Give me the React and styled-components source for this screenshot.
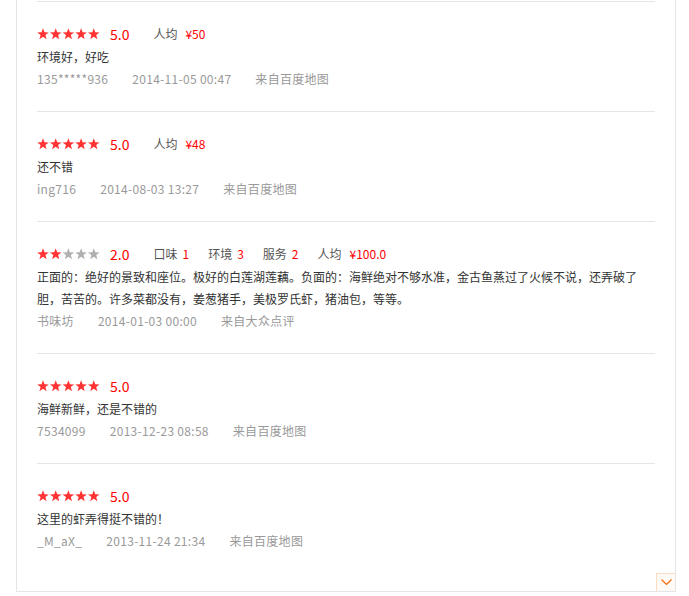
import React from 'react';
import styled, { createGlobalStyle } from 'styled-components';

const reviews = [
  {
    score: 5,
    price: '¥50',
    text: '环境好，好吃',
    user: '135*****936',
    time: '2014-11-05 00:47',
    from: '来自百度地图',
  },
  {
    score: 5,
    price: '¥48',
    text: '还不错',
    user: 'ing716',
    time: '2014-08-03 13:27',
    from: '来自百度地图',
  },
  {
    score: 2,
    subs: [
      { label: '口味', value: 1 },
      { label: '环境', value: 3 },
      { label: '服务', value: 2 },
    ],
    price: '¥100.0',
    text: '正面的：绝好的景致和座位。极好的白莲湖莲藕。负面的：海鲜绝对不够水准，金古鱼蒸过了火候不说，还弄破了胆，苦苦的。许多菜都没有，姜葱猪手，美极罗氏虾，猪油包，等等。',
    user: '书味坊',
    time: '2014-01-03 00:00',
    from: '来自大众点评',
  },
  {
    score: 5,
    text: '海鲜新鲜，还是不错的',
    user: '7534099',
    time: '2013-12-23 08:58',
    from: '来自百度地图',
  },
  {
    score: 5,
    text: '这里的虾弄得挺不错的！',
    user: '_M_aX_',
    time: '2013-11-24 21:34',
    from: '来自百度地图',
  },
];

const GlobalStyle = createGlobalStyle`
  body {
    margin: 0;
    background: #fff;
    font-family: "Microsoft YaHei", "Noto Sans CJK SC", sans-serif;
  }
`;

const Panel = styled.div`
  width: 658px;
  margin-left: 16px;
  padding-top: 1px;
  border-left: 1px solid #e5e5e5;
  border-right: 1px solid #e5e5e5;
  border-bottom: 1px solid #e5e5e5;
`;

const List = styled.ul`
  list-style: none;
  margin: 0;
  padding: 0 20px;
`;

const Item = styled.li`
  border-top: 1px solid #e5e5e5;
  padding: 20px 0 21px;
`;

const ScoreRow = styled.div`
  display: flex;
  align-items: center;
  height: 24px;
`;

const Score = styled.span`
  margin: 0 24px 0 10px;
  font-size: 14px;
  color: #f00;
  line-height: 24px;
`;

const Sub = styled.span`
  font-size: 12px;
  color: #555;
  margin-right: 19px;
  line-height: 24px;

  b {
    font-weight: normal;
    color: #f00;
    margin-left: ${(p) => (p.$price ? '8px' : '5px')};
  }
`;

const Content = styled.p`
  margin: 0;
  font-size: 12px;
  line-height: 22px;
  color: #333;
`;

const Meta = styled.div`
  display: flex;
  font-size: 12px;
  line-height: 22px;
  letter-spacing: 0.3px;
  color: #999;

  span {
    margin-right: 24px;
  }
`;

const Footer = styled.div`
  display: flex;
  justify-content: flex-end;
`;

const ScrollButton = styled.button`
  width: 19px;
  height: 18px;
  padding: 0;
  border: none;
  border-top: 1px solid #fbdcc3;
  border-left: 1px solid #fbdcc3;
  background: #fffaf5;
  display: flex;
  align-items: center;
  justify-content: center;
  cursor: pointer;
`;

const Stars = ({ score }) => (
  <svg width="63" height="12" viewBox="0 0 63 12">
    {[0, 1, 2, 3, 4].map((i) => (
      <polygon
        key={i}
        transform={`translate(${i * 12.7} 0)`}
        points="6,0.3 7.5,4.3 11.8,4.4 8.4,7 9.6,11.3 6,8.8 2.4,11.3 3.6,7 0.2,4.4 4.5,4.3"
        fill={i < score ? '#f33' : '#b0b0b0'}
      />
    ))}
  </svg>
);

const Review = ({ r }) => (
  <Item>
    <ScoreRow>
      <Stars score={r.score} />
      <Score>{r.score.toFixed(1)}</Score>
      {r.subs &&
        r.subs.map((s) => (
          <Sub key={s.label}>
            {s.label}
            <b>{s.value}</b>
          </Sub>
        ))}
      {r.price && (
        <Sub $price>
          人均
          <b>{r.price}</b>
        </Sub>
      )}
    </ScoreRow>
    <Content>{r.text}</Content>
    <Meta>
      <span>{r.user}</span>
      <span>{r.time}</span>
      <span>{r.from}</span>
    </Meta>
  </Item>
);

export default function App() {
  return (
    <>
      <GlobalStyle />
      <Panel>
        <List>
          {reviews.map((r, i) => (
            <Review key={i} r={r} />
          ))}
        </List>
        <Footer>
          <ScrollButton aria-label="更多">
            <svg width="11" height="7" viewBox="0 0 11 7">
              <polyline points="0.5,0.5 5.5,5.5 10.5,0.5" fill="none" stroke="#f60" strokeWidth="1.2" />
            </svg>
          </ScrollButton>
        </Footer>
      </Panel>
    </>
  );
}
